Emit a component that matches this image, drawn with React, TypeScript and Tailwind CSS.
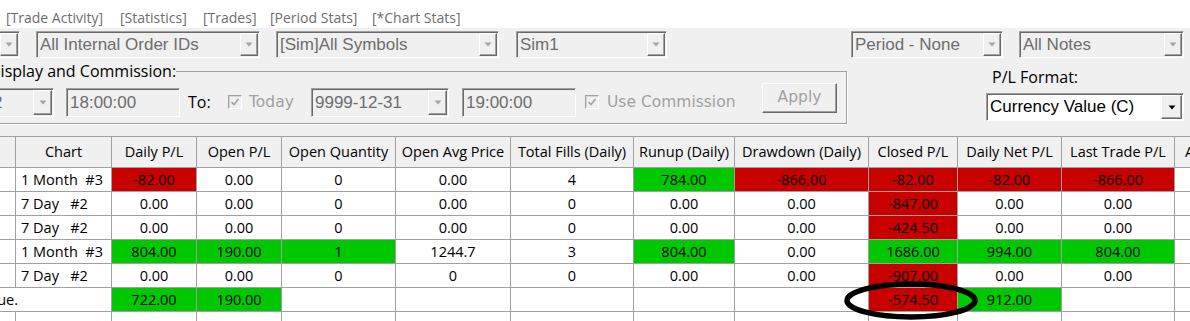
import React from "react";

const W = [
  "w-[16px]",
  "w-[96px]",
  "w-[85px]",
  "w-[85px]",
  "w-[114px]",
  "w-[115px]",
  "w-[123px]",
  "w-[101px]",
  "w-[134px]",
  "w-[89px]",
  "w-[104px]",
  "w-[113px]",
  "w-[15px]",
];

type Cell = { t?: string; c?: "r" | "g" };

const headers = [
  "",
  "Chart",
  "Daily P/L",
  "Open P/L",
  "Open Quantity",
  "Open Avg Price",
  "Total Fills (Daily)",
  "Runup (Daily)",
  "Drawdown (Daily)",
  "Closed P/L",
  "Daily Net P/L",
  "Last Trade P/L",
  "A",
];

const r = (t: string): Cell => ({ t, c: "r" });
const g = (t: string): Cell => ({ t, c: "g" });
const n = (t: string): Cell => ({ t });
const e: Cell = {};

const rows: Cell[][] = [
  [e, n("1 Month  #3"), r("-82.00"), n("0.00"), n("0"), n("0.00"), n("4"), g("784.00"), r("-866.00"), r("-82.00"), r("-82.00"), r("-866.00"), e],
  [e, n("7 Day   #2"), n("0.00"), n("0.00"), n("0"), n("0.00"), n("0"), n("0.00"), n("0.00"), r("-847.00"), n("0.00"), n("0.00"), e],
  [e, n("7 Day   #2"), n("0.00"), n("0.00"), n("0"), n("0.00"), n("0"), n("0.00"), n("0.00"), r("-424.50"), n("0.00"), n("0.00"), e],
  [e, n("1 Month  #3"), g("804.00"), g("190.00"), g("1"), n("1244.7"), n("3"), g("804.00"), n("0.00"), g("1686.00"), g("994.00"), g("804.00"), e],
  [e, n("7 Day   #2"), n("0.00"), n("0.00"), n("0"), n("0"), n("0"), n("0.00"), n("0.00"), r("-907.00"), n("0.00"), n("0.00"), e],
  [n("ue."), e, g("722.00"), g("190.00"), e, e, e, e, e, r("-574.50"), g("912.00"), e, e],
  [e, e, e, e, e, e, e, e, e, e, e, e, e],
];

function Arrow({ dark = false, className = "" }: { dark?: boolean; className?: string }) {
  return (
    <div
      className={`ml-auto flex shrink-0 items-center justify-center border border-t-white border-l-white border-r-[#696969] border-b-[#696969] bg-[#f0f0f0] shadow-[inset_-1px_-1px_0_#a0a0a0] ${className}`}
    >
      <svg width="8" height="5" viewBox="0 0 8 5">
        <polygon points="0.5,0.5 7.5,0.5 4,4.5" fill={dark ? "#000" : "#a3a3a3"} />
      </svg>
    </div>
  );
}

function Combo({
  text,
  className = "",
  white = false,
  arrowClass = "h-[23px] w-[18px] mr-[1px]",
}: {
  text: string;
  className?: string;
  white?: boolean;
  arrowClass?: string;
}) {
  return (
    <div
      className={`flex shrink-0 items-center border border-t-[#a0a0a0] border-l-[#a0a0a0] border-r-white border-b-white shadow-[inset_1px_1px_0_#696969] font-['Liberation_Sans',Arial,sans-serif] text-[17px] ${
        white ? "bg-white text-black" : "bg-[#f0f0f0] text-[#6d6d6d]"
      } ${className}`}
    >
      <span className="whitespace-nowrap pl-[3px]">{text}</span>
      <Arrow dark={white} className={arrowClass} />
    </div>
  );
}

function TextBox({ text, className = "" }: { text: string; className?: string }) {
  return (
    <div
      className={`flex shrink-0 items-center border border-t-[#a0a0a0] border-l-[#a0a0a0] border-r-white border-b-white shadow-[inset_1px_1px_0_#696969] bg-[#f0f0f0] pl-[3px] font-['Liberation_Sans',Arial,sans-serif] text-[17px] text-[#6d6d6d] ${className}`}
    >
      {text}
    </div>
  );
}

function Check() {
  return (
    <div className="flex h-[14px] w-[14px] shrink-0 items-center justify-center border border-t-[#a0a0a0] border-l-[#a0a0a0] border-r-white border-b-white bg-[#f0f0f0] shadow-[inset_1px_1px_0_#d4d4d4]">
      <svg width="10" height="10" viewBox="0 0 10 10">
        <path d="M1.5 5 L4 7.5 L8.5 2" fill="none" stroke="#a0a0a0" strokeWidth="1.6" />
      </svg>
    </div>
  );
}

export default function App() {
  return (
    <div className="relative h-[321px] w-[1190px] overflow-hidden bg-[#f0f0f0] font-['Open_Sans',sans-serif] text-black">
      {/* tabs */}
      <div className="flex h-[28px] items-center bg-white pl-[6px] pt-[7px] text-[14px] text-[#6e6e6e]">
        <span className="w-[114px] whitespace-nowrap">[Trade Activity]</span>
        <span className="w-[83px] whitespace-nowrap">[Statistics]</span>
        <span className="w-[67px] whitespace-nowrap">[Trades]</span>
        <span className="w-[102px] whitespace-nowrap">[Period Stats]</span>
        <span className="whitespace-nowrap">[*Chart Stats]</span>
      </div>

      {/* filters */}
      <div className="flex h-[108px] flex-col">
        <div className="flex pt-[3px]">
          <Combo text="" className="ml-[-20px] h-[27px] w-[40px]" />
          <Combo text="All Internal Order IDs" className="ml-[16px] h-[27px] w-[224px]" />
          <Combo text="[Sim]All Symbols" className="ml-[16px] h-[27px] w-[223px]" />
          <Combo text="Sim1" className="ml-[17px] h-[27px] w-[151px]" />
          <Combo text="Period - None" className="ml-[184px] h-[27px] w-[152px]" />
          <Combo text="All Notes" className="ml-[16px] h-[27px] w-[165px]" />
        </div>

        <div className="mt-[4px] flex">
          <fieldset className="ml-[-12px] w-[859px] shrink-0 border border-[#a0a0a0] shadow-[1px_1px_0_white]">
            <legend className="text-[16px] leading-[18px]">Display and Commission:</legend>
            <div className="flex h-[43px] items-start">
              <Combo text="2" className="mt-[8px] h-[29px] w-[65px]" arrowClass="h-[25px] w-[19px] mr-[1px]" />
              <TextBox text="18:00:00" className="ml-[12px] mt-[8px] h-[29px] w-[114px]" />
              <span className="ml-[8px] mt-[11px] w-[24px] text-[16px] leading-[22px]">To:</span>
              <div className="ml-[16px] mt-[15px]">
                <Check />
              </div>
              <span className="ml-[7px] mt-[11px] w-[48px] font-['DejaVu_Sans',Verdana,sans-serif] text-[15.5px] leading-[22px] text-[#a0a0a0]">
                Today
              </span>
              <Combo text="9999-12-31" className="ml-[14px] mt-[8px] h-[29px] w-[138px]" arrowClass="h-[25px] w-[19px] mr-[1px]" />
              <TextBox text="19:00:00" className="ml-[13px] mt-[8px] h-[29px] w-[114px]" />
              <div className="ml-[9px] mt-[15px]">
                <Check />
              </div>
              <span className="ml-[8px] mt-[11px] w-[130px] whitespace-nowrap font-['DejaVu_Sans',Verdana,sans-serif] text-[15.5px] leading-[22px] text-[#a0a0a0]">
                Use Commission
              </span>
              <div className="ml-[25px] mt-[3px] flex h-[30px] w-[75px] items-start justify-center border border-t-white border-l-white border-r-[#696969] border-b-[#696969] bg-[#f0f0f0] pt-[2px] shadow-[inset_-1px_-1px_0_#a0a0a0] font-['DejaVu_Sans',Verdana,sans-serif] text-[15.5px] leading-[22px] text-[#a0a0a0]">
                Apply
              </div>
            </div>
          </fieldset>

          <div className="ml-[139px] flex flex-col">
            <span className="mt-[4px] pl-[6px] text-[16px] leading-[22px]">P/L Format:</span>
            <Combo
              text="Currency Value (C)"
              white
              className="mt-[5px] h-[28px] w-[198px]"
              arrowClass="h-[24px] w-[21px] mr-[1px]"
            />
          </div>
        </div>
      </div>

      {/* table */}
      <div className="border-t border-[#a0a0a0] text-[14.5px]">
        <div className="flex h-[31px] border-b border-[#a0a0a0] bg-[#f0f0f0]">
          {headers.map((h, i) => (
            <div
              key={i}
              className={`${W[i]} flex h-full shrink-0 items-center overflow-hidden whitespace-nowrap ${
                i === 12 ? "justify-start pl-[10px]" : "justify-center border-r border-[#a0a0a0]"
              }`}
            >
              {h}
            </div>
          ))}
        </div>
        {rows.map((row, ri) => (
          <div key={ri} className="flex h-[24px] border-b border-[#a0a0a0] bg-white">
            {row.map((c, i) => {
              const bg = c.c === "r" ? "bg-[#c80000]" : c.c === "g" ? "bg-[#00c800]" : "bg-white";
              const special = ri === 5 && i === 0;
              return (
                <div
                  key={i}
                  className={`${W[i]} flex h-full shrink-0 items-center whitespace-pre ${bg} ${
                    i === 12 || special ? "" : "border-r border-[#a0a0a0]"
                  } ${
                    special
                      ? "justify-end overflow-visible z-10"
                      : i === 1
                      ? "justify-start pl-[5px]"
                      : "justify-center overflow-hidden"
                  }`}
                >
                  {special ? <span className="mr-[-2px]">{c.t}</span> : c.t}
                </div>
              );
            })}
          </div>
        ))}
      </div>

      {/* annotation ellipse */}
      <svg className="pointer-events-none absolute left-[842px] top-[281px]" width="140" height="42" viewBox="0 0 140 42">
        <ellipse cx="69" cy="19.5" rx="64" ry="16.5" fill="none" stroke="#000" strokeWidth="5.5" />
      </svg>
    </div>
  );
}
